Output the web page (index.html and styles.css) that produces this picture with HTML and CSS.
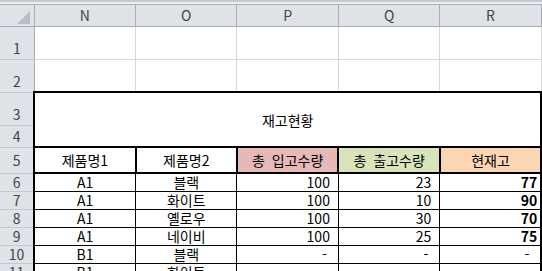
FILE: index.html
```html
<!DOCTYPE html>
<html lang="ko">
<head>
  <meta charset="UTF-8"/>
  <title>재고현황</title>
  <link rel="stylesheet" href="styles.css">
</head>
<body>

  <div class="sheet-top"></div>

  <table class="sheet">
    <colgroup>
      <col class="col-rowhead">
      <col class="col-cell">
      <col class="col-cell">
      <col class="col-cell">
      <col class="col-cell">
      <col class="col-cell">
      <col class="col-rest">
    </colgroup>
    <thead>
      <tr class="row-colhead">
        <th class="corner"><svg width="13" height="13" viewBox="0 0 13 13"><polygon points="13,0 13,13 0,13" fill="#b8bdc3"/></svg></th>
        <th>N</th>
        <th>O</th>
        <th>P</th>
        <th>Q</th>
        <th>R</th>
        <th></th>
      </tr>
    </thead>
    <tbody>
      <tr class="row-tall">
        <th>1</th>
        <td></td><td></td><td></td><td></td><td></td><td></td>
      </tr>
      <tr class="row-tall">
        <th>2</th>
        <td></td><td></td><td></td><td></td><td></td><td></td>
      </tr>
      <tr class="row-tall">
        <th>3</th>
        <td class="title" colspan="5" rowspan="2">재고현황</td>
        <td></td>
      </tr>
      <tr class="row-mid">
        <th>4</th>
        <td></td>
      </tr>
      <tr class="row-label">
        <th>5</th>
        <td class="label">제품명1</td>
        <td class="label">제품명2</td>
        <td class="label in">총 입고수량</td>
        <td class="label out">총 출고수량</td>
        <td class="label stock">현재고</td>
        <td></td>
      </tr>
      <tr class="row-data">
        <th>6</th>
        <td class="data first">A1</td><td class="data">블랙</td>
        <td class="data num">100</td><td class="data num">23</td><td class="data num last">77</td>
        <td></td>
      </tr>
      <tr class="row-data">
        <th>7</th>
        <td class="data first">A1</td><td class="data">화이트</td>
        <td class="data num">100</td><td class="data num">10</td><td class="data num last">90</td>
        <td></td>
      </tr>
      <tr class="row-data">
        <th>8</th>
        <td class="data first">A1</td><td class="data">옐로우</td>
        <td class="data num">100</td><td class="data num">30</td><td class="data num last">70</td>
        <td></td>
      </tr>
      <tr class="row-data">
        <th>9</th>
        <td class="data first">A1</td><td class="data">네이비</td>
        <td class="data num">100</td><td class="data num">25</td><td class="data num last">75</td>
        <td></td>
      </tr>
      <tr class="row-data">
        <th>10</th>
        <td class="data first">B1</td><td class="data">블랙</td>
        <td class="data num zero">-</td><td class="data num zero">-</td><td class="data num last zero">-</td>
        <td></td>
      </tr>
      <tr class="row-data">
        <th>11</th>
        <td class="data first">B1</td><td class="data">화이트</td>
        <td class="data num zero">-</td><td class="data num zero">-</td><td class="data num last zero">-</td>
        <td></td>
      </tr>
    </tbody>
  </table>

</body>
</html>
```

FILE: styles.css
```css
* {
  box-sizing: border-box;
}

body {
  margin: 0;
  width: 542px;
  height: 271px;
  overflow: hidden;
  background: #fff;
  font-family: "Noto Sans CJK KR", "Noto Sans", sans-serif;
  font-size: 14px;
  color: #000;
}

/* strip above the column letters */
.sheet-top {
  height: 5px;
  background: #eceef0;
  border-top: 2px solid #c5c9ce;
  border-bottom: 1px solid #a9afb6;
}

.sheet {
  border-collapse: collapse;
  table-layout: fixed;
  width: 600px;
  line-height: 16px;
}

.col-rowhead { width: 34px; }
.col-cell { width: 101px; }
.col-rest { width: 58px; }

.sheet td {
  padding: 0;
  border-right: 1px solid #d9d9d9;
  border-bottom: 1px solid #d9d9d9;
  text-align: center;
  vertical-align: middle;
  white-space: nowrap;
  overflow: hidden;
}

/* column letters and row numbers */
.sheet th {
  padding: 0;
  font-weight: normal;
  color: #444;
  background: #dfe3e8;
  border-right: 1px solid #c4c9d0;
  border-bottom: 1px solid #c4c9d0;
}

.sheet thead th {
  border-right: 1px solid #a9afb6;
  border-bottom: 1px solid #a9afb6;
  vertical-align: middle;
}

.sheet tbody th {
  border-right: 1px solid #a9afb6;
  vertical-align: bottom;
  padding-bottom: 3px;
}

.sheet .corner {
  text-align: right;
  vertical-align: bottom;
  padding: 0 4px 2px 0;
  line-height: 0;
}

.row-colhead { height: 21px; }
.row-tall { height: 33px; }
.row-mid { height: 22px; }
.row-label { height: 26px; }
.row-data { height: 18px; }

.sheet tbody .row-data th,
.sheet tbody .row-label th {
  vertical-align: middle;
  padding-bottom: 0;
}

/* merged title block */
.sheet .title {
  border: 2px solid #000;
}

.sheet .label {
  border: 2px solid #000;
  word-spacing: 3px;
}

.label.in { background: #e6b9b8; }
.label.out { background: #d8e4bc; }
.label.stock { background: #fcd5b4; }

.sheet .data {
  border: 1px solid #000;
}

.sheet .data.first {
  border-left: 2px solid #000;
}

.sheet .data.last {
  border-right: 2px solid #000;
  font-weight: bold;
  padding-right: 3px;
}

.sheet .num {
  text-align: right;
  padding-right: 8px;
}

.sheet .num.zero {
  padding-right: 11px;
  font-weight: normal;
}
```
